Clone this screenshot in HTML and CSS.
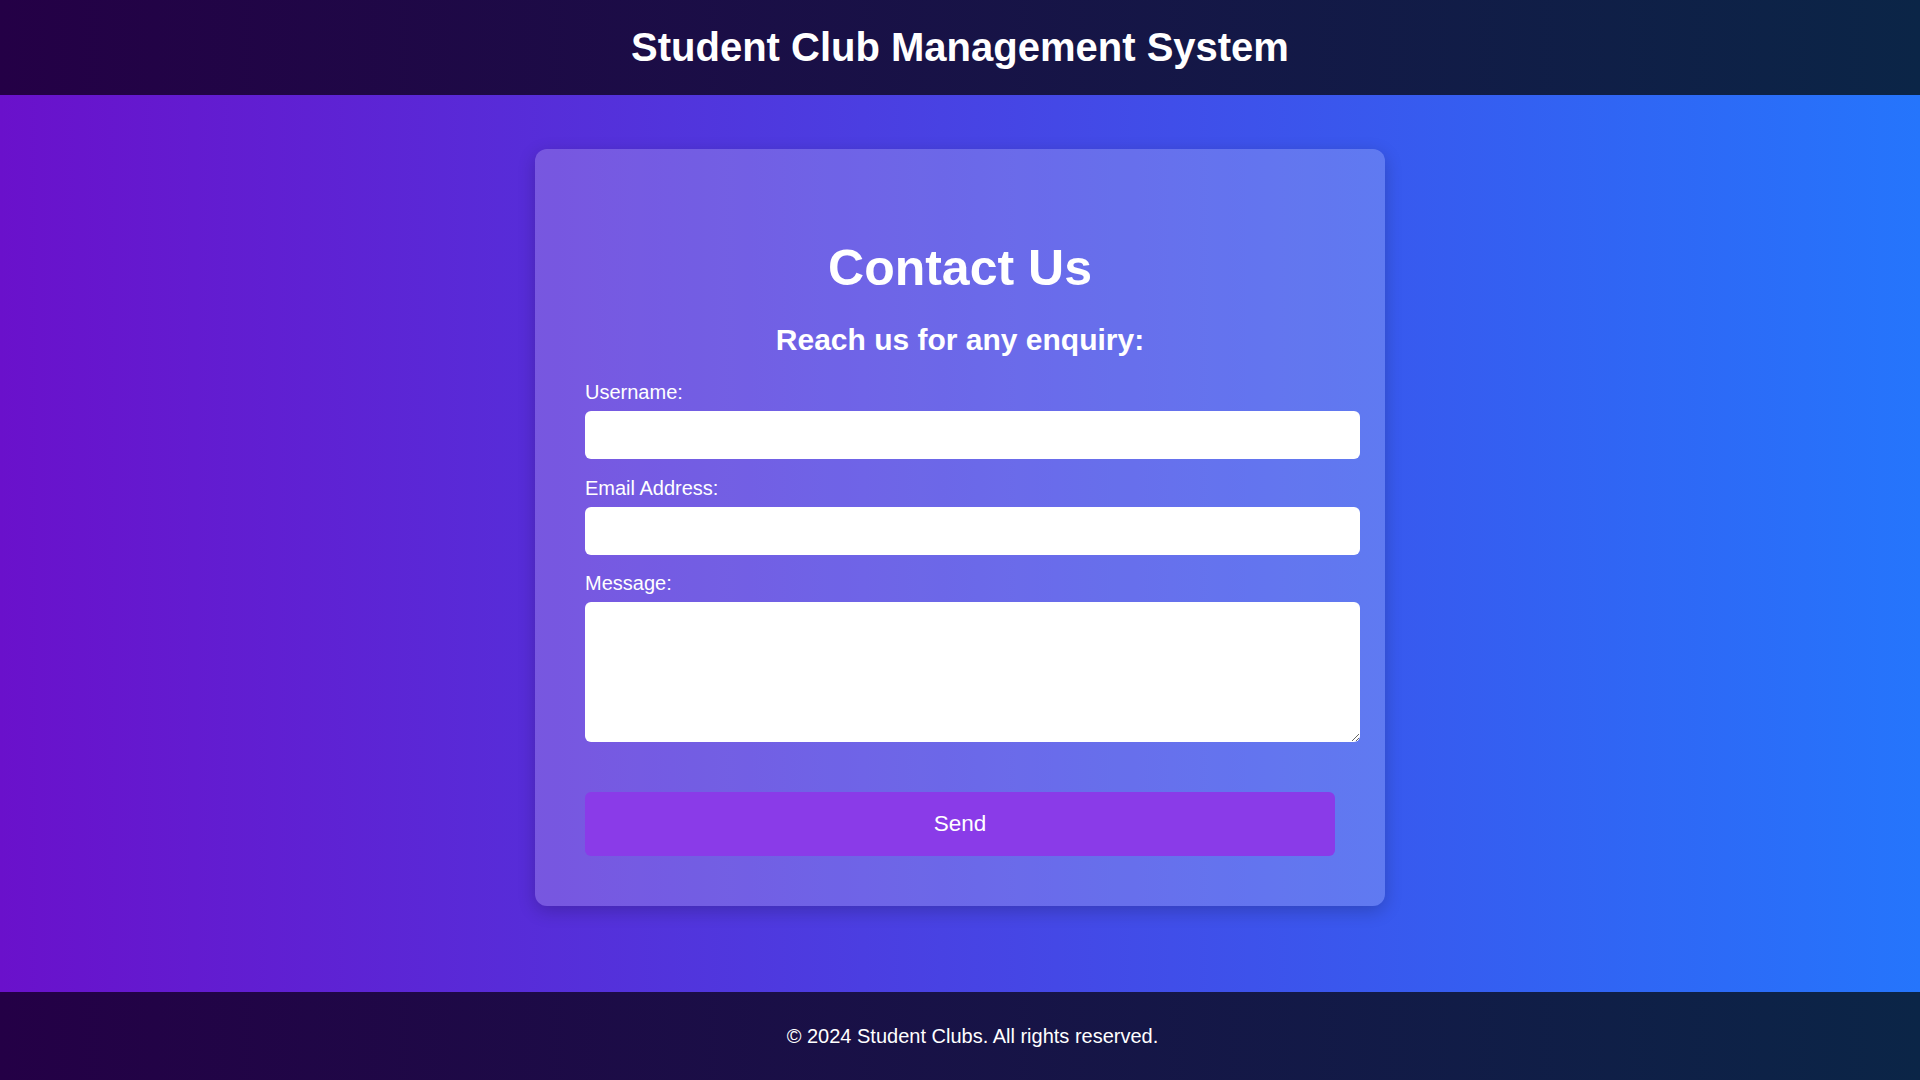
FILE: index.html
```html
<!DOCTYPE html>
<html lang="en">
<head>
<meta charset="utf-8">
<title>Contact Us - Student Club Management System</title>
<link rel="stylesheet" href="styles.css">
</head>
<body>
<header class="site-header">
  <h1 class="site-title">Student Club Management System</h1>
</header>
<main class="main">
  <section class="card">
    <h1 class="card-title">Contact Us</h1>
    <h2 class="card-subtitle">Reach us for any enquiry:</h2>
    <form class="form">
      <label class="label" for="username">Username:</label>
      <input class="field" type="text" id="username">
      <label class="label" for="email">Email Address:</label>
      <input class="field" type="email" id="email">
      <label class="label" for="message">Message:</label>
      <textarea class="field area" id="message"></textarea>
      <button class="send" type="button">Send</button>
    </form>
  </section>
</main>
<footer class="site-footer">
  <p class="copy">© 2024 Student Clubs. All rights reserved.</p>
</footer>
</body>
</html>
```

FILE: styles.css
```css
* { margin: 0; }
html, body { height: 100%; }
body {
  font-family: "Liberation Sans", Arial, sans-serif;
  color: #fff;
  display: flex;
  flex-direction: column;
  min-height: 100vh;
  background: linear-gradient(to right, #6a11cb, #2575fc);
}
.site-header {
  height: 95px;
  box-sizing: border-box;
  padding-bottom: 2px;
  display: flex;
  align-items: center;
  justify-content: center;
  background: linear-gradient(to right, #240046, #0b2547);
  flex: none;
}
.site-title {
  font-size: 40px;
  font-weight: bold;
  line-height: 46px;
}
.main {
  flex: 1;
  display: flex;
  justify-content: center;
  align-items: flex-start;
  padding-top: 54px;
}
.card {
  width: 850px;
  box-sizing: border-box;
  padding: 50px;
  background: rgba(255, 255, 255, 0.2);
  border-radius: 12px;
  box-shadow: 0 5px 18px rgba(0, 0, 0, 0.2);
}
.card-title {
  font-size: 50px;
  line-height: 58px;
  font-weight: bold;
  text-align: center;
  margin-top: 40px;
}
.card-subtitle {
  font-size: 30px;
  line-height: 35px;
  font-weight: bold;
  text-align: center;
  margin-top: 25px;
}
.form {
  display: flex;
  flex-direction: column;
  align-items: flex-start;
  margin-top: 24px;
}
.label {
  display: block;
  font-size: 20px;
  line-height: 23px;
  margin-bottom: 7px;
}
.field {
  display: block;
  width: 100%;
  box-sizing: content-box;
  padding: 12.5px;
  border: none;
  border-radius: 6px;
  background: #fff;
  font-family: "Liberation Sans", Arial, sans-serif;
  font-size: 20px;
  line-height: 23px;
  margin-bottom: 17.5px;
  outline: none;
}
.area {
  height: 115px;
  resize: vertical;
}
.send {
  display: block;
  width: 100%;
  height: 64px;
  margin-top: 32.5px;
  border: none;
  border-radius: 6px;
  background: #8a3be8;
  color: #fff;
  font-family: "Liberation Sans", Arial, sans-serif;
  font-size: 22.5px;
  cursor: pointer;
}
.site-footer {
  flex: none;
  height: 88px;
  box-sizing: border-box;
  padding-left: 25px;
  display: flex;
  align-items: center;
  justify-content: center;
  background: linear-gradient(to right, #240046, #0b2547);
}
.copy {
  font-size: 20px;
  line-height: 23px;
}
```
